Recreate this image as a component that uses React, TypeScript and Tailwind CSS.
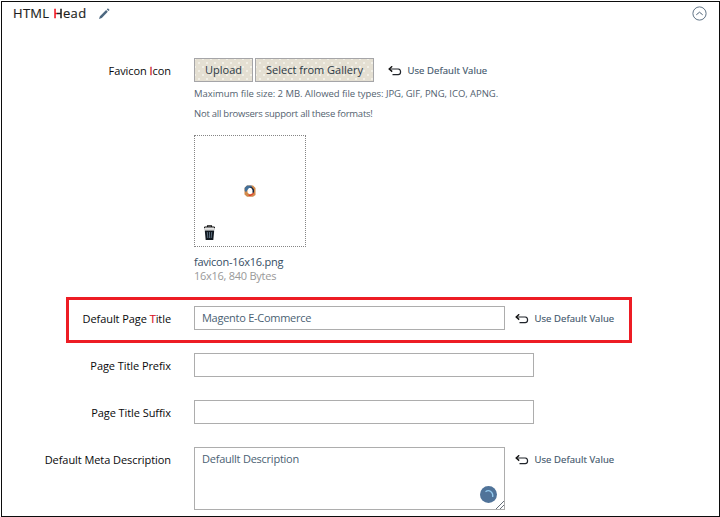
import type { ReactNode } from 'react';

function UndoIcon() {
  return (
    <svg width="14" height="11" viewBox="0 0 14 11" fill="none" className="shrink-0">
      <path d="M2 3H10.3Q12.6 3.3 12.6 6Q12.4 8.7 10.2 8.7H4.5" stroke="#20242b" strokeWidth="1.2" />
      <path d="M4.2 .3 1.2 3l3 2.6" stroke="#111" strokeWidth="1.4" />
    </svg>
  );
}

function UseDefault() {
  return (
    <div className="mt-px flex h-6 items-center gap-[5.5px]">
      <UndoIcon />
      <span className="whitespace-nowrap text-[9.5px] leading-6 tracking-[0.07px] text-[#41566b] [-webkit-text-stroke:0.15px_#41566b]">
        Use Default Value
      </span>
    </div>
  );
}

function Label({ children, width = 'w-[169px]' }: { children: ReactNode; width?: string }) {
  return (
    <label
      className={`${width} mr-[23px] shrink-0 whitespace-nowrap text-right text-[11px] leading-[26px] tracking-[-0.07px] text-[#08090b]`}
    >
      {children}
    </label>
  );
}

function Button({ children, width }: { children: ReactNode; width: string }) {
  return (
    <button
      className={`${width} h-6 whitespace-nowrap border border-[#a5a5a8] bg-[#e4dfd2] bg-[radial-gradient(circle,#faf8f2_0.6px,transparent_0.9px),radial-gradient(circle,#faf8f2_0.6px,transparent_0.9px)] bg-[length:8px_8px] bg-[position:0_0,4px_4px] text-[11px] leading-[22px] text-[#2b3845]`}
    >
      {children}
    </button>
  );
}

export default function App() {
  return (
    <div className="h-[517px] w-[720px] overflow-hidden bg-white pl-px pt-px font-['Open_Sans','Noto_Sans',sans-serif]">
      <section className="h-[516px] w-[719px] border border-[#0c0c0c]">
        <header className="flex h-[22px] items-center justify-between pl-[11px] pr-3">
          <div className="flex items-center gap-[13px]">
            <h2 className="whitespace-nowrap text-[13px] leading-[22px] tracking-[0.3px] text-[#1c1e21] [-webkit-text-stroke:0.15px_#1c1e21]">
              HTML{' '}
              <span className="bg-[linear-gradient(90deg,#f0101c_4px,#1c1e21_4px)] bg-clip-text text-transparent [-webkit-text-stroke:0.5px_transparent]">
                H
              </span>
              ead
            </h2>
            <svg width="11" height="11" viewBox="0 0 11 11">
              <path d="M0 11 .9 8.2 7.1 2l1.7 1.7L2.8 10zM7.8 1.4 8.9.3 10.6 2 9.5 3.1z" fill="#4d6880" />
            </svg>
          </div>
          <svg width="15" height="15" viewBox="0 0 15 15" fill="none" stroke="#4f6478">
            <circle cx="7.5" cy="7.5" r="6.6" strokeWidth=".9" />
            <path d="m4.3 8.8 3.2-2.6 3.2 2.6" strokeWidth="1" />
          </svg>
        </header>

        <div className="mt-[34px] flex h-[239px]">
          <Label>
            Favicon <span className="text-[#c8142a] [-webkit-text-stroke:0.3px_#c8142a]">I</span>con
          </Label>
          <div>
            <div className="flex h-6">
              <Button width="w-[59px]">Upload</Button>
              <Button width="ml-[2px] mr-[14px] w-[119px]">Select from Gallery</Button>
              <UseDefault />
            </div>
            <p className="mt-[2px] whitespace-nowrap text-[9.5px] leading-5 tracking-[-0.05px] text-[#53626f]">
              Maximum file size: 2 MB. Allowed file types: JPG, GIF, PNG, ICO, APNG.
            </p>
            <p className="whitespace-nowrap text-[9.5px] leading-5 tracking-[-0.24px] text-[#53626f]">
              Not all browsers support all these formats!
            </p>
            <div className="relative mt-[11px] flex size-28 items-center justify-center border border-dotted border-[#858585]">
              <svg width="12" height="12" viewBox="0 0 12 12">
                <path d="M3 .5h6L11.5 3v7L9 11.8H3L.5 9.5V3z" fill="#d18a4b" />
                <path d="M.7 6V2.7L3 .5h4.5l.7 2-4 2L2 7z" fill="#447099" />
                <path d="M5.5 1.5 8.5 2.5l1.5 2v3L8 8V4z" fill="#17243b" />
                <path d="M4.5 10 6 10.5l2.5-1.2 1-1.3" fill="none" stroke="#e3262b" />
                <path d="M5 3h2l1.5 2v3L7 9H5L3.5 7.5V5z" fill="#fff" />
              </svg>
              <svg width="11" height="15" viewBox="0 0 11 15" className="absolute bottom-[6px] left-[9px]">
                <path d="M3.5 2V.8h4V2M0 3.2 1 2h9l1 1.2" fill="none" stroke="#111" strokeWidth="1.1" />
                <path d="M0 3.7h11v.8H0z" fill="#aaa" />
                <path d="M.8 5.5h9.4L9.3 15H1.7z" fill="#111820" />
                <path d="m3.3 7 .5 6M5.5 7v6M7.7 7l-.5 6" stroke="#6d8396" strokeWidth=".8" />
              </svg>
            </div>
            <p className="mt-2 whitespace-nowrap text-[11px] leading-[14px] tracking-[-0.26px] text-[#354d64]">
              favicon-16x16.png
            </p>
            <p className="whitespace-nowrap text-[11px] leading-[14px] tracking-[-0.26px] text-[#999]">16x16, 840 Bytes</p>
          </div>
        </div>

        <div className="ml-16 flex h-[46px] w-[566px] border-[3px] border-[#ed1c24] pt-[6px]">
          <Label width="w-[102px]">
            Default Page <span className="text-[#d9152a] [-webkit-text-stroke:0.2px_#d9152a]">T</span>itle
          </Label>
          <input
            className="mr-[10px] h-6 w-[311px] shrink-0 border border-[#adadad] px-[7px] pb-px text-[11px] tracking-[-0.27px] text-[#4b5f73] outline-none"
            defaultValue="Magento E-Commerce"
          />
          <UseDefault />
        </div>

        <div className="mt-[10px] flex h-[47px]">
          <Label>Page Title Prefix</Label>
          <input className="h-6 w-[340px] border border-[#adadad] outline-none" />
        </div>
        <div className="flex h-[47px]">
          <Label>Page Title Suffix</Label>
          <input className="h-6 w-[340px] border border-[#adadad] outline-none" />
        </div>
        <div className="flex">
          <Label>Default Meta Description</Label>
          <div className="relative mr-[10px] h-[63px] w-[311px]">
            <textarea
              className="block h-full w-full resize-none border border-[#adadad] px-[7px] py-[3px] text-[11px] leading-4 tracking-[-0.24px] text-[#4b5f73] outline-none"
              defaultValue="Defaullt Description"
            />
            <svg width="17" height="17" viewBox="0 0 17 17" className="absolute bottom-[7px] right-2">
              <circle cx="8.5" cy="8.5" r="8.5" fill="#507399" />
              <path d="M5.5 5.7C9 3.2 13.5 6 12.7 11" fill="none" stroke="#93c9ee" strokeWidth="1.3" />
            </svg>
            <svg width="8" height="8" viewBox="0 0 8 8" className="absolute bottom-px right-px">
              <path d="m0 8 8-8M4 8l4-4" stroke="#555f6b" strokeWidth=".9" />
            </svg>
          </div>
          <UseDefault />
        </div>
      </section>
    </div>
  );
}
